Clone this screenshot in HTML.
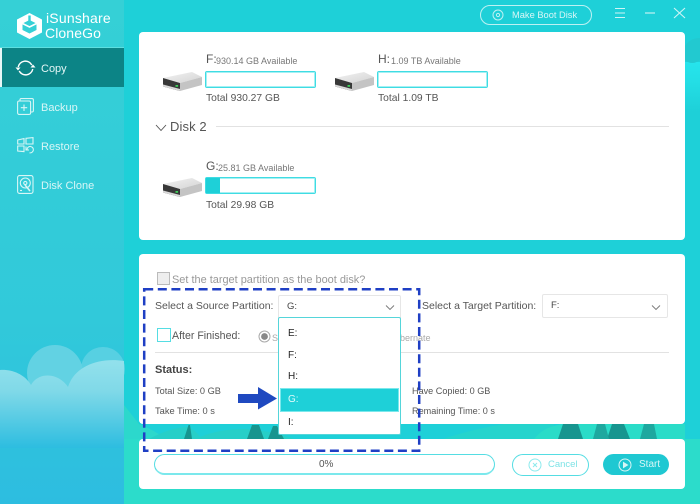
<!DOCTYPE html>
<html><head><meta charset="utf-8">
<style>
html,body{margin:0;padding:0}
body{width:700px;height:504px;overflow:hidden;position:relative;font-family:"Liberation Sans",sans-serif;background:#1ed0d8}
.a{position:absolute;white-space:nowrap}
.card{position:absolute;background:#fff;border-radius:4px}
.t{position:absolute;white-space:nowrap;color:#555;font-size:10px;line-height:12px}
.nav{position:absolute;white-space:nowrap;color:#d8f6f6;font-size:11px;line-height:14px;left:41px}
.bar{position:absolute;width:111px;height:17px;border:1px solid #3fdce3;box-shadow:inset 0 0 0 1px #a5f0f3;border-radius:2px;background:#fff;box-sizing:border-box}
.sel{position:absolute;background:#fff;border:1px solid #e6e6e6;border-radius:2px;box-sizing:border-box;height:24px}
.it{position:absolute;left:9px;font-size:10px;color:#222;line-height:12px}
svg{position:absolute;overflow:visible}
</style></head><body>

<!-- main background -->
<svg style="left:124px;top:0" width="576" height="504" viewBox="0 0 576 504">
<defs><linearGradient id="rs" x1="0" y1="0" x2="0" y2="1"><stop offset="0" stop-color="#26e4ec"/><stop offset=".35" stop-color="#24dfe6"/><stop offset="1" stop-color="#1ed0d8"/></linearGradient></defs>
<rect width="576" height="504" fill="#1ed0d8"/>
<path d="M561 62H576V112H561Z" fill="url(#rs)"/>
<path d="M561 60V46Q566 38 576 38V60Q568 66 561 60Z" fill="#22c9d0"/>
<!-- hills -->
<rect x="0" y="439" width="576" height="65" fill="#2cdccb"/>
<path d="M0 405Q8 415 15 424Q30 430 42 439H0Z" fill="#2cd8cc"/>
<path d="M25 439Q45 428 63 427Q72 430 76 437Q95 429 121 429Q150 431 170 439Z" fill="#27cfc8"/>
<path d="M319 439Q345 430 380 424L430 424L430 439Z" fill="#25d4cd"/>
<path d="M410 439Q420 426 440 424L561 424V439Z" fill="#2adcc8"/>
<path d="M561 443H576V504H561Z" fill="#2cdccb"/>
<g fill="#17958f">
<path d="M60 439L64.5 425H66L68 439Z"/>
<path d="M123 439L128 425H135L140 439Z"/>
<path d="M144 439L149 426H153L160 439Z"/>
<path d="M434 439L439 424H454L459 439Z"/>
<path d="M483 439L488 424H500L506 439Z"/>
</g>
<g fill="#1ea89f">
<path d="M469 439L473 424H481L485 439Z"/>
<path d="M516 439L520 424H530L533 439Z"/>
</g>
</svg>

<!-- sidebar -->
<div class="a" style="left:0;top:0;width:124px;height:504px;background:linear-gradient(#35d0d6 0,#31c9da 320px,#2dbde0 504px)"></div>
<svg style="left:0;top:330px" width="124" height="174" viewBox="0 0 124 174">
<defs><linearGradient id="c" x1="0" y1="0" x2="0" y2="1"><stop offset="0" stop-color="#93e1ec"/><stop offset=".35" stop-color="#80d9e8"/><stop offset="1" stop-color="#2dbde0"/></linearGradient></defs>
<circle cx="55" cy="43" r="28" fill="#62d2e3"/>
<circle cx="103" cy="39" r="22" fill="#62d2e3" opacity=".8"/>
<path d="M0 40C14 39 26 46 31 55C38 42 58 42 68 57C74 38 96 27 124 31V118H0Z" fill="url(#c)"/>
</svg>
<div class="a" style="left:0;top:48px;width:124px;height:39px;background:#0c8486;border-left:2px solid #e7f7f7;box-sizing:border-box"></div>
<div class="a" style="left:0;top:47px;width:124px;height:1px;background:#5ddfe0"></div>

<!-- logo -->
<svg style="left:17px;top:13px" width="25" height="26" viewBox="0 0 25 26">
<path d="M12.5 0L25 6.5V19.5L12.5 26L0 19.5V6.5Z" fill="#fff"/>
<path d="M5.5 10.5L12.5 7L19.5 10.5V17L12.5 20.5L5.5 17Z" fill="#35d0d6"/>
<path d="M5.5 10.5L12.5 14L19.5 10.5" fill="none" stroke="#fff" stroke-width="1.6"/>
<path d="M12.5 2.5V8" stroke="#35d0d6" stroke-width="2.4"/>
</svg>
<div class="a" style="left:46px;top:10px;color:#fff;font-size:14px;line-height:17px;letter-spacing:.2px">iSunshare</div>
<div class="a" style="left:45px;top:25px;color:#fff;font-size:14px;line-height:17px;letter-spacing:.1px">CloneGo</div>

<!-- nav icons -->
<svg style="left:15px;top:58px" width="21" height="20" viewBox="0 0 21 20" fill="none" stroke="#fff" stroke-width="1.4">
<path d="M3.2 9A7.3 7.3 0 0 1 16.8 7"/><path d="M17.8 11A7.3 7.3 0 0 1 4.2 13"/>
<path d="M0.5 9.5H5.5L3 12.5Z" fill="#fff" stroke="none"/><path d="M15.5 9.5H20.5L18 6.5Z" fill="#fff" stroke="none"/>
</svg>
<svg style="left:17px;top:98px" width="17" height="17" viewBox="0 0 17 17" fill="none" stroke="#d8f6f6" stroke-width="1.1">
<rect x=".6" y="3" width="13" height="13.4" rx="1.5"/><path d="M3 3V1.8Q3 .6 4.2 .6H15Q16.4 .6 16.4 2V12.5Q16.4 14 15 14H13.6"/><path d="M7 6.5V13M3.8 9.7H10.2"/>
</svg>
<svg style="left:17px;top:137px" width="17" height="17" viewBox="0 0 17 17" fill="none" stroke="#d8f6f6" stroke-width="1.1">
<path d="M.7 3L7 1.6V7H.7ZM9 1.3L16 .6V7H9ZM.7 9H7V14.6L.7 14Z"/><path d="M10 12.5A3.2 3.2 0 1 1 12.5 15.8"/><path d="M9 9.5V13H12"/>
</svg>
<svg style="left:17px;top:175px" width="17" height="19" viewBox="0 0 17 19" fill="none" stroke="#d8f6f6" stroke-width="1.1">
<rect x=".6" y=".6" width="15.4" height="17.8" rx="2"/><circle cx="8.3" cy="8" r="5"/><circle cx="8.3" cy="8" r="1.6"/><path d="M8 10L13 16" stroke-width="1.6"/><path d="M3 15.5H5"/>
</svg>

<div class="nav" style="top:62px;color:#e4f6f6">Copy</div>
<div class="nav" style="top:101px">Backup</div>
<div class="nav" style="top:140px">Restore</div>
<div class="nav" style="top:179px">Disk Clone</div>

<!-- top bar -->
<div class="a" style="left:480px;top:5px;width:112px;height:20px;border:1px solid #bdf1f3;border-radius:11px;box-sizing:border-box"></div>
<svg style="left:492px;top:9px" width="13" height="13" viewBox="0 0 13 13" fill="none" stroke="#bdf1f3" stroke-width="1"><circle cx="6" cy="6" r="5"/><circle cx="6" cy="6" r="1.6"/></svg>
<div class="a" style="left:512px;top:9px;color:#d8f6f6;font-size:9.3px;line-height:12px">Make Boot Disk</div>
<svg style="left:615px;top:7px" width="80" height="12" viewBox="0 0 80 12" fill="none" stroke="#d0f5f6" stroke-width="1.1">
<path d="M0 1.5H10M0 6H10M0 10.5H10"/><path d="M30 6H40"/><path d="M59 1L70 11M70 1L59 11"/>
</svg>

<!-- top card -->
<div class="card" style="left:139px;top:32px;width:546px;height:208px"></div>

<svg width="0" height="0" style="position:absolute"><defs>
<linearGradient id="dt" x1="0" y1="0" x2="1" y2="1"><stop offset="0" stop-color="#f2f2f2"/><stop offset="1" stop-color="#d4d4d4"/></linearGradient>
<g id="disk">
<path d="M0 7L29 1L39 6L17 12Z" fill="url(#dt)"/>
<path d="M0 7L17 12V20L0 15.5Z" fill="#383838"/>
<path d="M0 13.5L17 18V20L0 15.5Z" fill="#d9d9d9"/>
<path d="M17 12L39 6V14L17 20Z" fill="#c4c4c4"/>
<rect x="12.5" y="14" width="2.6" height="1.8" fill="#3fce5a"/>
</g></defs></svg>

<svg style="left:163px;top:71px" width="40" height="20"><use href="#disk"/></svg>
<div class="t" style="left:206px;top:51px;font-size:12px;line-height:16px;color:#555">F:</div>
<div class="t" style="left:216px;top:55px;font-size:9px;color:#777">930.14 GB Available</div>
<div class="bar" style="left:205px;top:71px"></div>
<div class="t" style="left:206px;top:93px;font-size:10.3px">Total 930.27 GB</div>

<svg style="left:335px;top:71px" width="40" height="20"><use href="#disk"/></svg>
<div class="t" style="left:378px;top:51px;font-size:12px;line-height:16px;color:#555">H:</div>
<div class="t" style="left:391px;top:55px;font-size:9px;color:#777">1.09 TB Available</div>
<div class="bar" style="left:377px;top:71px"></div>
<div class="t" style="left:378px;top:93px;font-size:10.3px">Total 1.09 TB</div>

<svg style="left:155px;top:124px" width="12" height="8" viewBox="0 0 12 8" fill="none" stroke="#555" stroke-width=".9"><path d="M1 1L6 6.5L11 1"/></svg>
<div class="t" style="left:170px;top:119px;font-size:13px;line-height:16px;color:#555;letter-spacing:.1px">Disk 2</div>
<div class="a" style="left:216px;top:126px;width:453px;height:1px;background:#e2e2e2"></div>

<svg style="left:163px;top:177px" width="40" height="20"><use href="#disk"/></svg>
<div class="t" style="left:206px;top:158px;font-size:12px;line-height:16px;color:#555">G:</div>
<div class="t" style="left:218px;top:162px;font-size:9px;color:#777">25.81 GB Available</div>
<div class="bar" style="left:205px;top:177px"></div>
<div class="a" style="left:206px;top:178px;width:14px;height:15px;background:#1ed0d8"></div>
<div class="t" style="left:206px;top:200px;font-size:10.3px">Total 29.98 GB</div>

<!-- second card -->
<div class="card" style="left:139px;top:254px;width:546px;height:170px"></div>
<div class="a" style="left:157px;top:272px;width:13px;height:13px;background:#eee;border:1px solid #bbb;box-sizing:border-box"></div>
<div class="t" style="left:172px;top:274px;font-size:10.95px;color:#999">Set the target partition as the boot disk?</div>

<div class="t" style="left:155px;top:300px;font-size:10.5px;line-height:13px">Select a Source Partition:</div>
<div class="sel" style="left:278px;top:295px;width:123px"></div>
<div class="t" style="left:287px;top:301px;font-size:9.5px;color:#444">G:</div>
<svg style="left:385px;top:304px" width="10" height="7" viewBox="0 0 10 7" fill="none" stroke="#777" stroke-width=".9"><path d="M1 1.5L5 5.5L9 1.5"/></svg>

<div class="t" style="left:422px;top:300px;font-size:10.5px;line-height:13px">Select a Target Partition:</div>
<div class="sel" style="left:542px;top:294px;width:126px"></div>
<div class="t" style="left:551px;top:300px;font-size:9.5px;color:#444">F:</div>
<svg style="left:651px;top:304px" width="10" height="7" viewBox="0 0 10 7" fill="none" stroke="#777" stroke-width=".9"><path d="M1 1.5L5 5.5L9 1.5"/></svg>

<div class="a" style="left:157px;top:328px;width:14px;height:14px;border:1px solid #55dde3;box-sizing:border-box;background:#fff"></div>
<div class="t" style="left:172px;top:330px;font-size:10.6px">After Finished:</div>
<svg style="left:258px;top:330px" width="14" height="14"><circle cx="6.5" cy="6.5" r="5.5" fill="#fff" stroke="#aaa"/><circle cx="6.5" cy="6.5" r="3.4" fill="#888"/></svg>
<div class="t" style="left:272px;top:332px;font-size:9px;color:#aaa">Sl</div>
<div class="t" style="left:400px;top:332px;font-size:9px;color:#aaa">bernate</div>

<div class="a" style="left:155px;top:352px;width:514px;height:1px;background:#e2e2e2"></div>
<div class="t" style="left:155px;top:363px;font-size:11px;line-height:14px;color:#444;font-weight:bold">Status:</div>
<div class="t" style="left:155px;top:385px;font-size:9.2px">Total Size: 0 GB</div>
<div class="t" style="left:155px;top:405px;font-size:9.3px">Take Time: 0 s</div>
<div class="t" style="left:412px;top:385px;font-size:9.1px">Have Copied: 0 GB</div>
<div class="t" style="left:412px;top:405px;font-size:9.1px">Remaining Time: 0 s</div>

<!-- bottom card -->
<div class="card" style="left:139px;top:439px;width:546px;height:50px"></div>
<div class="a" style="left:154px;top:454px;width:341px;height:21px;border:1px solid #55dde3;border-bottom:2px solid #7be8ec;border-radius:11px;box-sizing:border-box;background:#fff"></div>
<div class="t" style="left:319px;top:459px;font-size:10px">0%</div>
<div class="a" style="left:512px;top:454px;width:77px;height:22px;border:1px solid #55dde3;border-radius:11px;box-sizing:border-box;background:#fff"></div>
<svg style="left:528px;top:458px" width="14" height="14" fill="none" stroke="#8deaed" stroke-width="1"><circle cx="7" cy="7" r="6"/><path d="M5 5L9 9M9 5L5 9"/></svg>
<div class="t" style="left:548px;top:459px;font-size:9.5px;color:#7fe3e6">Cancel</div>
<div class="a" style="left:603px;top:454px;width:66px;height:21px;background:#1fc8d2;border-radius:11px"></div>
<svg style="left:618px;top:458px" width="14" height="14" fill="none" stroke="#d8f6f6" stroke-width="1"><circle cx="7" cy="7" r="6"/><path d="M5.5 4.5L9.5 7L5.5 9.5Z" fill="#d8f6f6"/></svg>
<div class="t" style="left:639px;top:459px;font-size:10px;color:#d8f6f6">Start</div>

<!-- dropdown -->
<div class="a" style="left:278px;top:317px;width:123px;height:118px;background:#fff;border:1px solid #55d5da;border-radius:2px;box-sizing:border-box">
<div class="it" style="top:10px">E:</div>
<div class="it" style="top:32px">F:</div>
<div class="it" style="top:53px">H:</div>
<div class="a" style="left:1px;top:70px;width:119px;height:24px;background:#1ed0d8;border:1px solid #7be8ec;box-sizing:border-box"></div>
<div class="it" style="top:76px;color:#e0fafa">G:</div>
<div class="it" style="top:99px">I:</div>
</div>

<!-- arrow -->
<svg style="left:238px;top:387px" width="40" height="23" viewBox="0 0 40 23"><path d="M0 7H20V0L39 11.5L20 22.5V16H0Z" fill="#1f49c0"/></svg>

<!-- dashed box -->
<svg style="left:143px;top:288px" width="278" height="164" viewBox="0 0 278 164" fill="none" stroke="#1f3fc4" stroke-width="2.5">
<rect x="1.2" y="1.2" width="275" height="161.5" stroke-dasharray="9 4.6"/>
</svg>

</body></html>
